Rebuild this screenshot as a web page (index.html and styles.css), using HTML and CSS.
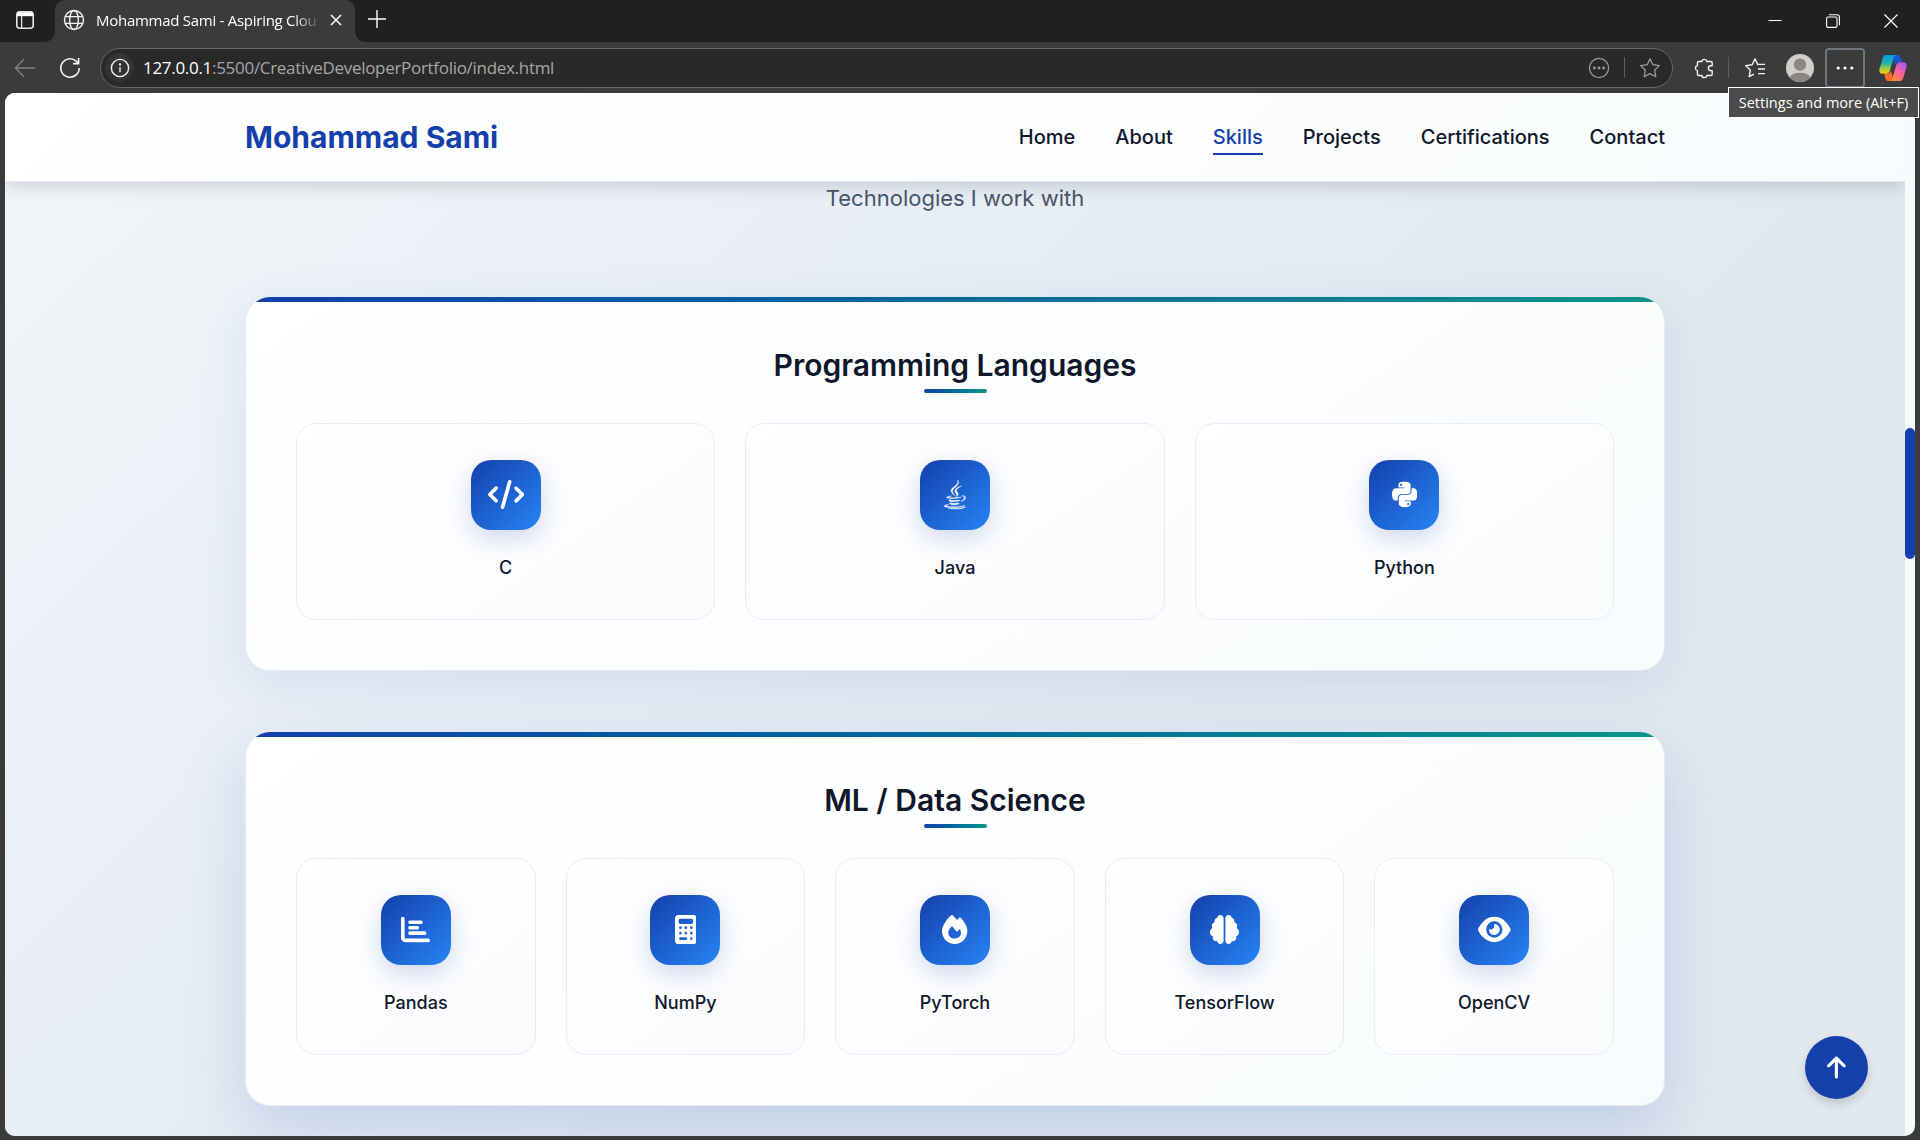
FILE: index.html
```html
<!DOCTYPE html>
<html lang="en">
<head>
<meta charset="utf-8">
<title>Mohammad Sami - Aspiring Cloud Engineer</title>
<link rel="stylesheet" href="styles.css">
</head>
<body>
<div class="browser">
  <div class="tabstrip">
    <div class="tab-actions"><svg width="20" height="20" viewBox="0 0 20 20" fill="none" stroke="#e6e6e6" stroke-width="1.6"><rect x="1.8" y="1.8" width="16.4" height="16.4" rx="3"/><path d="M2 4.2h16" stroke="#fff" stroke-width="4"/><path d="M6.6 6v12" stroke-width="1.3"/></svg></div>
    <div class="tab">
      <svg class="globe" width="22" height="22" viewBox="0 0 22 22" fill="none" stroke="#f2f2f2" stroke-width="1.4"><circle cx="11" cy="11" r="9.5"/><ellipse cx="11" cy="11" rx="4.4" ry="9.5"/><path d="M2.3 7.6h17.4M2.3 14.4h17.4"/></svg>
      <span class="tab-title">Mohammad Sami - Aspiring Clou</span>
      <svg class="tab-close" width="12" height="12" viewBox="0 0 12 12" stroke="#fff" stroke-width="1.5"><path d="M1 1l10 10M11 1L1 11"/></svg>
    </div>
    <svg class="new-tab" width="18" height="18" viewBox="0 0 18 18" stroke="#fff" stroke-width="1.4"><path d="M9 0v18M0 9h18"/></svg>
    <div class="window-buttons">
      <svg width="14" height="14" viewBox="0 0 14 14" stroke="#fff"><path d="M.5 6.5h13"/></svg>
      <svg width="14" height="14" viewBox="0 0 14 14" fill="none" stroke="#fff" stroke-width="1.1"><rect x=".6" y="3" width="10.4" height="10.4" rx="1.4"/><path d="M3 .8h8a2.4 2.4 0 0 1 2.4 2.4v8"/></svg>
      <svg width="14" height="14" viewBox="0 0 14 14" stroke="#fff" stroke-width="1.2"><path d="M.5.5l13 13M13.5.5l-13 13"/></svg>
    </div>
  </div>

  <div class="toolbar">
    <svg class="back" width="22" height="20" viewBox="0 0 22 20" fill="none" stroke="#828282" stroke-width="1.3"><path d="M21 10H1.5M10 1.2L1.3 10l8.7 8.8"/></svg>
    <svg class="reload" width="22" height="22" viewBox="0 0 22 22" fill="none" stroke="#f2f2f2" stroke-width="1.6"><path d="M20.2 11a9.2 9.2 0 1 1-3-6.8l2.3 2.1"/><path d="M19.6 1v5.6H14"/></svg>
    <div class="address">
      <span class="info"><svg width="20" height="20" viewBox="0 0 20 20" fill="none" stroke="#f2f2f2" stroke-width="1.4"><circle cx="10" cy="10" r="8.6"/><path d="M10 9v5.2"/><circle cx="10" cy="6.4" r=".5"/></svg></span>
      <span class="url"><b>127.0.0.1</b>:5500/CreativeDeveloperPortfolio/index.html</span>
      <div class="address-tools">
        <svg width="22" height="22" viewBox="0 0 22 22" fill="none" stroke="#9b9b9b" stroke-width="1.2"><circle cx="11" cy="11" r="9.6"/><g fill="#9b9b9b" stroke="none"><circle cx="6.4" cy="11" r="1.4"/><circle cx="11" cy="11" r="1.4"/><circle cx="15.6" cy="11" r="1.4"/></g></svg>
        <i class="divider"></i>
        <svg width="22" height="22" viewBox="0 0 22 22" fill="none" stroke="#9b9b9b" stroke-width="1.3" stroke-linejoin="round"><path d="M11 1.8l2.8 5.9 6.6.9-4.8 4.6 1.2 6.5L11 16.6l-5.8 3.1 1.2-6.5-4.8-4.6 6.6-.9z"/></svg>
      </div>
    </div>
    <div class="toolbar-tools">
      <svg class="ext" width="22" height="22" viewBox="0 0 22 22" fill="none" stroke="#f2f2f2" stroke-width="1.4" stroke-linejoin="round"><path d="M5.700 4.500h3.100a2.600 2.600 0 0 1 5.100 0h4a1.300 1.300 0 0 1 1.300 1.300v3h-1.400a2.400 2.400 0 0 0 0 4.800h1.400v3.600a1.300 1.300 0 0 1-1.300 1.300h-4a2.600 2.600 0 0 1-5.100 0H5.700a1.300 1.300 0 0 1-1.300-1.300v-3.600a2.500 2.500 0 0 1 0-4.900V5.800a1.300 1.300 0 0 1 1.300-1.300z"/></svg>
      <i class="divider"></i>
      <svg class="fav" width="22" height="22" viewBox="0 0 22 22" fill="none" stroke="#f2f2f2" stroke-width="1.4" stroke-linejoin="round"><path d="M14.2 7.6h-.4L11 1.8 8.2 7.7l-6.6.9 4.8 4.6-1.2 6.5 4.8-2.6M13 7.4h8M14 12h7M14 16.6h7"/></svg>
      <svg class="avatar" width="28" height="28" viewBox="0 0 28 28"><circle cx="14" cy="14" r="14" fill="#d1cfcc"/><circle cx="14" cy="10.7" r="6.2" fill="#8b8683"/><path d="M3.6 23.3C5.5 19.900 9.500 18.700 14 18.700s8.500 1.200 10.400 4.600A14 14 0 0 1 3.600 23.300z" fill="#8b8683"/></svg>
      <span class="more"><svg width="18" height="4" viewBox="0 0 18 4" fill="#fff"><circle cx="2.200" cy="2" r="1.600"/><circle cx="9" cy="2" r="1.600"/><circle cx="15.800" cy="2" r="1.600"/></svg></span>
      <svg class="copilot" width="28" height="28" viewBox="0 0 28 28">
        <defs>
          <linearGradient id="cp-a" x1="0" y1="0" x2="0" y2="1"><stop offset="0" stop-color="#0a9be8"/><stop offset=".45" stop-color="#1fb6a8"/><stop offset=".75" stop-color="#a9cf3c"/><stop offset="1" stop-color="#ffc21a"/></linearGradient>
          <linearGradient id="cp-b" x1=".8" y1="0" x2=".3" y2="1"><stop offset="0" stop-color="#a259ef"/><stop offset=".5" stop-color="#ff5f9e"/><stop offset="1" stop-color="#ff8a3c"/></linearGradient>
        </defs>
        <path d="M13 1h5.500c1.700 0 2.600 1 3.100 2.600L23 8.300h-3.200c-2 0-3 1-3.600 3z" fill="#1558d6"/>
        <path d="M15 27H9.500c-1.700 0-2.600-1-3.100-2.600L5.200 19.700h3.200c2 0 3-1 3.600-3z" fill="#ff6a2b"/>
        <path d="M6.800 1h10.700c-1.700 0-2.500 1.500-3 3.200l-3.600 12.200c-.6 2-1.700 3.300-3.800 3.300H3.200c-2.800 0-3.300-2.600-2.600-5L3.700 4.200C4.300 2.300 5.200 1 6.800 1z" fill="url(#cp-a)"/>
        <path d="M21.200 27H10.500c1.700 0 2.500-1.500 3-3.200l3.600-12.200c.6-2 1.700-3.300 3.800-3.300h3.900c2.800 0 3.300 2.600 2.600 5l-3.100 10.500c-.6 1.900-1.500 3.200-3.100 3.200z" fill="url(#cp-b)"/>
      </svg>
    </div>
    <div class="tooltip">Settings and more (Alt+F)</div>
  </div>

  <div class="viewport">
    <div class="page">
      <header class="navbar">
        <a class="logo">Mohammad Sami</a>
        <nav class="nav-links">
          <a>Home</a><a>About</a><a class="active">Skills</a><a>Projects</a><a>Certifications</a><a>Contact</a>
        </nav>
      </header>

      <section class="skills">
        <p class="subtitle">Technologies I work with</p>

        <article class="category">
          <h3>Programming Languages</h3>
          <div class="grid cols-3">
            <div class="skill"><span class="tile"><svg viewBox="0 0 640 512"><path d="M392.8 1.2c-17-4.900-34.700 5-39.600 22l-128 448c-4.900 17 5 34.700 22 39.600s34.700-5 39.600-22l128-448c4.900-17-5-34.700-22-39.600zm80.600 120.100c-12.500 12.500-12.500 32.800 0 45.300L562.700 256l-89.400 89.400c-12.500 12.500-12.500 32.800 0 45.300s32.800 12.500 45.300 0l112-112c12.500-12.500 12.500-32.800 0-45.300l-112-112c-12.500-12.500-32.800-12.500-45.300 0zm-306.700 0c-12.500-12.500-32.800-12.500-45.300 0l-112 112c-12.500 12.500-12.500 32.800 0 45.300l112 112c12.500 12.500 32.800 12.500 45.300 0s12.500-32.800 0-45.300L77.300 256l89.400-89.400c12.500-12.500 12.500-32.800 0-45.300z"/></svg></span><span class="name">C</span></div>
            <div class="skill"><span class="tile"><svg class="java" viewBox="0 0 384 512"><path d="M277.740 312.900c9.800-6.700 23.400-12.500 23.400-12.500s-38.700 7-77.200 10.200c-47.100 3.900-97.700 4.700-123.100 1.300-60.100-8 33-30.100 33-30.100s-36.100-2.400-80.600 19c-52.500 25.400 130 37 224.500 12.100zm-85.400-32.100c-19-42.700-83.100-80.200 0-145.800C296 53.200 242.840 0 242.840 0c21.500 84.500-75.600 110.100-110.700 162.600-23.900 35.900 11.700 74.400 60.200 118.200zm114.600-176.200c.1 0-175.200 43.800-91.500 140.200 24.700 28.400-6.500 54-6.500 54s62.700-32.400 33.900-72.900c-26.900-37.800-47.500-56.600 64.100-121.300zm-6.100 270.500a12.190 12.190 0 0 1-2 2.600c128.300-33.700 81.100-118.900 19.800-97.300a17.330 17.330 0 0 0-8.200 6.300 70.450 70.450 0 0 1 11-3c31-6.500 75.500 41.500-20.600 91.400zM348 437.400s14.500 11.900-15.900 21.200c-57.900 17.500-240.800 22.800-291.600.7-18.300-7.900 16-19 26.800-21.300 11.200-2.400 17.700-2 17.700-2-20.300-14.300-131.300 28.100-56.400 40.200C232.840 509.400 401 461.300 348 437.400zM124.440 396c-78.700 22 47.900 67.400 148.100 24.500a185.890 185.890 0 0 1-28.200-13.800c-44.700 8.500-65.400 9.100-106 4.500-33.500-3.800-13.900-15.200-13.900-15.200zm179.800 97.200c-78.700 14.800-175.800 13.100-233.300 3.600 0-.1 11.800 9.700 72.400 13.600 92.200 5.900 233.800-3.300 237.100-46.900 0 0-6.400 16.500-76.200 29.700zM260.640 353c-59.200 11.400-93.500 11.100-136.800 6.600-33.500-3.500-11.600-19.700-11.600-19.700-86.800 28.800 48.200 61.400 169.500 25.900a60.370 60.370 0 0 1-21.100-12.800z"/></svg></span><span class="name">Java</span></div>
            <div class="skill"><span class="tile"><svg viewBox="0 0 448 512"><path d="M439.800 200.500c-7.700-30.900-22.300-54.200-53.400-54.200h-40.100v47.400c0 36.800-31.200 67.800-66.800 67.800H172.700c-29.200 0-53.400 25-53.400 54.300v101.800c0 29 25.200 46 53.400 54.300 33.800 9.900 66.300 11.700 106.800 0 26.900-7.800 53.400-23.500 53.400-54.300v-40.700H226.200v-13.600h160.200c31.100 0 42.600-21.700 53.400-54.200 11.200-33.500 10.700-65.700 0-108.600zM286.200 404c11.100 0 20.100 9.100 20.100 20.300 0 11.300-9 20.400-20.100 20.400-11 0-20.100-9.200-20.100-20.400.1-11.300 9.100-20.300 20.100-20.300zM167.800 248.100h106.800c29.700 0 53.400-24.500 53.400-54.300V91.900c0-29-24.400-50.700-53.400-55.600-35.800-5.900-74.700-5.600-106.800.1-45.200 8-53.400 24.700-53.400 55.600v40.700h106.900v13.600h-147c-31.100 0-58.300 18.700-66.800 54.200-9.800 40.700-10.200 66.100 0 108.600 7.600 31.600 25.700 54.200 56.800 54.200H101v-48.800c0-35.300 30.500-66.400 66.800-66.400zm-6.700-142.600c-11.100 0-20.100-9.100-20.100-20.300.1-11.300 9-20.400 20.100-20.400 11 0 20.100 9.200 20.100 20.400s-9 20.300-20.100 20.300z"/></svg></span><span class="name">Python</span></div>
          </div>
        </article>

        <article class="category deep">
          <h3>ML / Data Science</h3>
          <div class="grid cols-5">
            <div class="skill"><span class="tile"><svg viewBox="0 0 512 512"><path d="M32 32c17.700 0 32 14.300 32 32V400c0 8.800 7.200 16 16 16H480c17.700 0 32 14.300 32 32s-14.300 32-32 32H80c-44.200 0-80-35.800-80-80V64C0 46.300 14.300 32 32 32zm96 96c0-17.700 14.300-32 32-32l192 0c17.700 0 32 14.300 32 32s-14.300 32-32 32l-192 0c-17.700 0-32-14.300-32-32zm32 64H288c17.700 0 32 14.300 32 32s-14.300 32-32 32H160c-17.700 0-32-14.300-32-32s14.300-32 32-32zm0 96H416c17.700 0 32 14.300 32 32s-14.300 32-32 32H160c-17.700 0-32-14.300-32-32s14.300-32 32-32z"/></svg></span><span class="name">Pandas</span></div>
            <div class="skill"><span class="tile"><svg viewBox="0 0 384 512"><path fill-rule="evenodd" d="M64 0H320a64 64 0 0 1 64 64V448a64 64 0 0 1-64 64H64a64 64 0 0 1-64-64V64A64 64 0 0 1 64 0zM96 64a32 32 0 0 0-32 32v32a32 32 0 0 0 32 32H288a32 32 0 0 0 32-32V96a32 32 0 0 0-32-32zM72 224a24 24 0 1 0 48 0a24 24 0 1 0-48 0zM168 224a24 24 0 1 0 48 0a24 24 0 1 0-48 0zM264 224a24 24 0 1 0 48 0a24 24 0 1 0-48 0zM72 320a24 24 0 1 0 48 0a24 24 0 1 0-48 0zM168 320a24 24 0 1 0 48 0a24 24 0 1 0-48 0zM264 320a24 24 0 1 0 48 0a24 24 0 1 0-48 0zM264 416a24 24 0 1 0 48 0a24 24 0 1 0-48 0zM96 392a24 24 0 0 0 0 48H192a24 24 0 0 0 0-48z"/></svg></span><span class="name">NumPy</span></div>
            <div class="skill"><span class="tile"><svg viewBox="0 0 448 512"><path fill-rule="evenodd" d="M159.300 5.400c7.800-7.300 19.900-7.200 27.700 .1c27.600 25.900 53.500 53.800 77.700 84c11-14.400 23.500-30.100 37-42.900c7.900-7.400 20.100-7.400 28 .1c34.600 33 63.900 76.600 84.500 118c20.300 40.800 33.800 82.500 33.800 111.900C448 404.200 348.200 512 224 512C98.400 512 0 404.100 0 276.500c0-38.400 17.800-85.300 45.400-131.700C73.300 97.700 112.700 48.600 159.300 5.400zM225.700 416c25.300 0 47.700-7 68.800-21c42.100-29.400 53.400-88.200 28.100-134.400c-4.500-9-16-9.600-22.500-2l-25.200 29.300c-6.600 7.600-18.500 7.400-24.700-.5c-16.500-21-46-58.500-62.800-79.800c-6.300-8-18.300-8.100-24.700-.1c-33.800 42.500-50.800 69.300-50.800 99.400C112 375.400 162.600 416 225.700 416z"/></svg></span><span class="name">PyTorch</span></div>
            <div class="skill"><span class="tile"><svg viewBox="0 0 512 512"><path d="M184 0c30.900 0 56 25.100 56 56V456c0 30.900-25.100 56-56 56c-28.900 0-52.700-21.900-55.700-50.100c-5.200 1.400-10.700 2.100-16.300 2.100c-35.300 0-64-28.700-64-64c0-7.400 1.300-14.600 3.600-21.200C21.400 367.400 0 338.200 0 304c0-31.900 18.700-59.500 45.800-72.300C37.100 220.800 32 207 32 192c0-30.700 21.600-56.300 50.400-62.600C80.800 123.900 80 118 80 112c0-29.900 20.600-55.100 48.300-62.100C131.300 21.900 155.100 0 184 0zM328 0c28.900 0 52.600 21.900 55.700 49.900c27.800 7 48.300 32.100 48.300 62.100c0 6-.8 11.900-2.400 17.400c28.800 6.200 50.400 31.900 50.400 62.600c0 15-5.100 28.800-13.800 39.700C493.300 244.500 512 272.100 512 304c0 34.200-21.400 63.400-51.600 74.800c2.300 6.600 3.600 13.800 3.600 21.200c0 35.300-28.700 64-64 64c-5.600 0-11.100-.7-16.300-2.100c-3 28.200-26.800 50.100-55.700 50.100c-30.900 0-56-25.100-56-56V56c0-30.900 25.100-56 56-56z"/></svg></span><span class="name">TensorFlow</span></div>
            <div class="skill"><span class="tile"><svg viewBox="0 0 576 512"><path d="M288 32c-80.800 0-145.500 36.800-192.600 80.600C48.600 156 17.300 208 2.500 243.700c-3.300 7.900-3.300 16.700 0 24.600C17.300 304 48.600 356 95.400 399.400C142.500 443.200 207.200 480 288 480s145.500-36.800 192.600-80.600c46.800-43.500 78.100-95.400 93-131.100c3.300-7.900 3.300-16.700 0-24.600c-14.900-35.700-46.200-87.700-93-131.100C433.500 68.800 368.800 32 288 32zM144 256a144 144 0 1 1 288 0 144 144 0 1 1 -288 0zm144-64c0 35.300-28.700 64-64 64c-7.100 0-13.900-1.200-20.300-3.300c-5.500-1.800-11.900 1.600-11.700 7.400c.3 6.900 1.300 13.800 3.200 20.700c13.700 51.200 66.400 81.600 117.600 67.900s81.600-66.400 67.900-117.600c-11.100-41.500-47.800-69.400-88.600-71.100c-5.800-.2-9.200 6.100-7.400 11.700c2.100 6.400 3.300 13.200 3.300 20.300z" fill-rule="evenodd"/></svg></span><span class="name">OpenCV</span></div>
          </div>
        </article>
      </section>
      <button class="to-top"><svg viewBox="0 0 384 512"><path d="M214.600 41.400c-12.500-12.500-32.800-12.500-45.300 0l-160 160c-12.500 12.500-12.500 32.800 0 45.300s32.800 12.500 45.300 0L160 141.200V448c0 17.700 14.300 32 32 32s32-14.300 32-32V141.200L329.400 246.600c12.500 12.500 32.800 12.500 45.300 0s12.500-32.800 0-45.300l-160-160z"/></svg></button>
    </div>
    <div class="scrollbar"><div class="thumb"></div></div>
  </div>
</div>
</body>
</html>
```
FILE: styles.css
```css
* { box-sizing: border-box; margin: 0; padding: 0; }

body { overflow: hidden; font-family: Inter, "Liberation Sans", sans-serif; }
svg { display: block; flex: none; }

.browser {
  display: flex;
  flex-direction: column;
  width: 1920px;
  height: 1140px;
  background: #3b3b3b;
  font-family: "Open Sans", "Noto Sans", sans-serif;
}

/* Tab strip */
.tabstrip { display: flex; height: 42px; background: #202020; }
.tab-actions { width: 55px; padding: 10px 0 0 15px; background: #202020; border-bottom-right-radius: 10px; }
.tab {
  position: relative;
  display: flex;
  align-items: center;
  width: 300px;
  padding: 0 14px 2px 8px;
  background: #3b3b3b;
  border-radius: 10px 10px 0 0;
}
.tab::before, .tab::after {
  content: "";
  position: absolute;
  bottom: 0;
  width: 10px;
  height: 10px;
}
.tab::before { left: -10px; background: radial-gradient(circle at 0 0, #202020 9.5px, #3b3b3b 10px); }
.tab::after { right: -10px; background: radial-gradient(circle at 100% 0, #202020 9.5px, #3b3b3b 10px); }
.tab-title {
  flex: none;
  width: 223px;
  margin: 0 11px 0 11px;
  white-space: nowrap;
  font-size: 15px;
  letter-spacing: -0.27px;
  color: #fff;
  -webkit-mask-image: linear-gradient(90deg, #000 198px, transparent 225px);
  mask-image: linear-gradient(90deg, #000 198px, transparent 225px);
}
.new-tab { margin: 10px 0 0 13px; }
.window-buttons { display: flex; gap: 44px; margin: 14px 22px 0 auto; }

/* Toolbar */
.toolbar {
  position: relative;
  z-index: 5;
  display: flex;
  align-items: center;
  height: 51px;
  padding: 0 13px 0 14px;
}
.reload { margin-left: 23px; }
.address {
  display: flex;
  align-items: center;
  width: 1573px;
  height: 40px;
  margin-left: 19px;
  padding: 0 11px 0 4px;
  background: #292929;
  border: 1px solid #676767;
  border-radius: 20px;
}
.info {
  display: flex;
  align-items: center;
  justify-content: center;
  width: 29px;
  height: 29px;
  background: #333;
  border-radius: 50%;
}
.url { margin-left: 9px; font-size: 17px; letter-spacing: -0.3px; white-space: nowrap; color: #a6a6a6; }
.url b { font-weight: 400; color: #fff; }
.address-tools { display: flex; align-items: center; gap: 14px; margin-left: auto; }
.divider { width: 1px; height: 21px; background: #5d5d5d; }
.toolbar-tools { display: flex; align-items: center; margin-left: auto; }
.toolbar-tools .divider { margin: 0 15px 0 13px; }
.avatar { margin: 0 11px 0 20px; }
.more {
  display: flex;
  align-items: center;
  justify-content: center;
  width: 40px;
  height: 40px;
  border: 2px solid #6f767e;
  border-radius: 4px;
}
.copilot { margin-left: 14px; }
.tooltip {
  position: absolute;
  top: 45px;
  right: 1px;
  width: 191px;
  height: 31px;
  border: 1px solid #fff;
  background: #4b4b4b;
  font-size: 14.5px;
  line-height: 29px;
  text-align: center;
  white-space: nowrap;
  color: #fff;
}

/* Page area */
.viewport {
  display: flex;
  width: 1910px;
  height: 1043px;
  margin-left: 5px;
  overflow: hidden;
  border-radius: 10px;
  background: #f8fbfd;
  font-family: Inter, "Liberation Sans", sans-serif;
}
.page {
  position: relative;
  width: 1900px;
  overflow: hidden;
  background: linear-gradient(135deg, #f2f6fa 0%, #e8eef6 35%, #e1e8f0 65%);
}
.scrollbar { width: 10px; padding-top: 335px; }
.thumb { width: 10px; height: 131px; border-radius: 5px; background: #1440ab; }

.navbar {
  position: relative;
  z-index: 2;
  display: flex;
  align-items: center;
  justify-content: space-between;
  height: 89px;
  padding: 0 240px;
  background: linear-gradient(135deg, #fff, #f8fbfd);
  border-bottom: 1px solid #e3e7f0;
  box-shadow: 0 5px 16px rgba(0, 0, 0, 0.14);
}
.logo { font-size: 30px; font-weight: 700; color: #1440ab; }
.nav-links { display: flex; gap: 40px; font-size: 20px; font-weight: 500; color: #0f172a; }
.nav-links a { position: relative; }
.nav-links .active { color: #1440ab; }
.nav-links .active::after {
  content: "";
  position: absolute;
  left: 0;
  right: 0;
  bottom: -6px;
  height: 2px;
  background: #1440ab;
}

.skills { display: flex; flex-direction: column; padding: 0 240px; }
.subtitle { height: 115px; line-height: 33px; font-size: 22px; text-align: center; color: #475569; }

.category {
  position: relative;
  height: 374px;
  margin-bottom: 61px;
  padding: 49px 50px 0;
  overflow: hidden;
  border: 1px solid #e6ebf4;
  border-top: 0;
  border-radius: 25px;
  background: linear-gradient(145deg, #fff, #f8fbfd);
  box-shadow: 0 12px 50px rgba(30, 80, 175, 0.1);
}
.category.deep { box-shadow: 0 25px 62px rgba(30, 80, 175, 0.17); }
.category::before {
  content: "";
  position: absolute;
  top: 0;
  left: -1px;
  right: -1px;
  height: 5px;
  background: linear-gradient(90deg, #1440ab, #0061a0 38%, #0b9488);
}
.category h3 {
  position: relative;
  height: 77px;
  line-height: 38px;
  font-size: 30px;
  font-weight: 600;
  text-align: center;
  color: #0f172a;
}
.category h3::after {
  content: "";
  position: absolute;
  top: 43px;
  left: calc(50% - 31px);
  width: 63px;
  height: 4px;
  border-radius: 2px;
  background: linear-gradient(90deg, #1440ab, #0061a0 38%, #0b9488);
}
.grid { display: grid; gap: 30px; }
.cols-3 { grid-template-columns: repeat(3, 1fr); }
.cols-5 { grid-template-columns: repeat(5, 1fr); }
.skill {
  display: flex;
  flex-direction: column;
  align-items: center;
  height: 197px;
  padding-top: 36px;
  border: 1px solid #e8ecf6;
  border-radius: 20px;
  background: linear-gradient(145deg, #fff, #fafbfd);
}
.tile {
  display: flex;
  align-items: center;
  justify-content: center;
  width: 70px;
  height: 70px;
  padding-bottom: 1px;
  border-radius: 20px;
  background: linear-gradient(135deg, #1440ab, #2684f5);
  box-shadow: 0 8px 25px rgba(20, 64, 171, 0.2);
}
.tile svg { height: 29px; fill: #fff; }
.tile .java { overflow: visible; stroke: #fff; stroke-width: 7; }
.name { margin-top: 24px; line-height: 28px; font-size: 18px; font-weight: 500; color: #0f172a; }

.to-top {
  position: absolute;
  right: 37px;
  bottom: 37px;
  display: flex;
  align-items: center;
  justify-content: center;
  width: 63px;
  height: 63px;
  padding-bottom: 1px;
  border: 0;
  border-radius: 50%;
  background: #1440ab;
  box-shadow: 0 5px 10px rgba(0, 0, 0, 0.15);
}
.to-top svg { height: 25px; fill: #fff; }
```
